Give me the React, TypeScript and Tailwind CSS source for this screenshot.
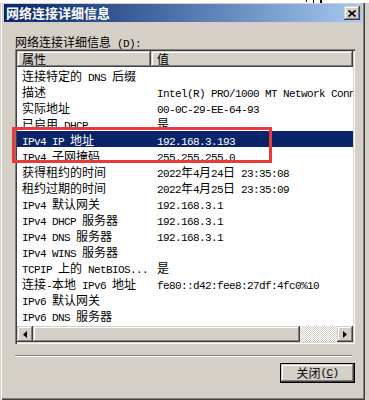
const rows: [string, string][] = [
  ["连接特定的 DNS 后缀", ""],
  ["描述", "Intel(R) PRO/1000 MT Network Connection"],
  ["实际地址", "00-0C-29-EE-64-93"],
  ["已启用 DHCP", "是"],
  ["IPv4 IP 地址", "192.168.3.193"],
  ["IPv4 子网掩码", "255.255.255.0"],
  ["获得租约的时间", "2022年4月24日 23:35:08"],
  ["租约过期的时间", "2022年4月25日 23:35:09"],
  ["IPv4 默认网关", "192.168.3.1"],
  ["IPv4 DHCP 服务器", "192.168.3.1"],
  ["IPv4 DNS 服务器", "192.168.3.1"],
  ["IPv4 WINS 服务器", ""],
  ["TCPIP 上的 NetBIOS...", "是"],
  ["连接-本地 IPv6 地址", "fe80::d42:fee8:27df:4fc0%10"],
  ["IPv6 默认网关", ""],
  ["IPv6 DNS 服务器", ""],
];

const raised =
  "bg-[#d4d0c8] shadow-[inset_-1px_-1px_#404040,inset_1px_1px_#d4d0c8,inset_-2px_-2px_#808080,inset_2px_2px_#ffffff]";

// SimSun look: latin half width (6px), CJK full width (12px)
function Txt({ s }: { s: string }) {
  const parts = s.match(/[\x00-\x7f]+|[^\x00-\x7f]+/g) ?? [];
  return (
    <>
      {parts.map((p, i) =>
        /^[\x00-\x7f]/.test(p) ? (
          <span key={i} className="font-['Liberation_Mono',monospace] text-[11px] tracking-[-0.6px]">
            {p}
          </span>
        ) : (
          <span key={i} className="font-['Noto_Sans_CJK_SC',sans-serif] text-[12px]">
            {p}
          </span>
        )
      )}
    </>
  );
}

function Arrow({ left }: { left?: boolean }) {
  return (
    <div className={`flex h-[16px] w-[16px] shrink-0 items-center justify-center ${raised}`}>
      <svg width="4" height="7" viewBox="0 0 4 7">
        {left ? <path d="M4 0 L0 3.5 L4 7 Z" fill="#000" /> : <path d="M0 0 L4 3.5 L0 7 Z" fill="#000" />}
      </svg>
    </div>
  );
}

export default function App() {
  return (
    <div className="relative h-[400px] w-[369px] overflow-hidden bg-white">
      <div className="flex h-[3px] gap-[6px] pl-[306px]">
        <div className="h-[2px] w-[1px] bg-black" />
        <div className="h-[3px] w-[1px] bg-black" />
        <div className="h-[3px] w-[2px] bg-black" />
      </div>
      <div className="flex">
        <div className="flex h-[397px] w-[365px] flex-col bg-[#d4d0c8] pt-[1px] pr-[3px] pb-[2px] pl-[4px] shadow-[inset_1px_0_#d4d0c8,inset_2px_0_#ffffff,inset_-1px_-1px_#404040,inset_-2px_-2px_#808080]">
          {/* title bar */}
          <div className="flex h-[18px] items-center justify-between bg-gradient-to-r from-[#0a246a] to-[#a6caf0] pr-[2px] pl-[2px]">
            <span className="font-['Noto_Sans_CJK_SC',sans-serif] text-[13px] leading-[18px] font-bold text-white">
              网络连接详细信息
            </span>
            <div className={`flex h-[14px] w-[16px] items-center justify-center ${raised}`}>
              <svg width="8" height="7" viewBox="0 0 8 7">
                <path d="M0.5 0.5 L7.5 6.5 M7.5 0.5 L0.5 6.5" stroke="#000" strokeWidth="1.6" />
              </svg>
            </div>
          </div>

          {/* body */}
          <div className="flex flex-1 flex-col pr-[7px] pl-[11px]">
            <div className="mt-[11px] h-[16px] leading-[16px] whitespace-pre text-black">
              <Txt s="网络连接详细信息 (D):" />
            </div>

            <div className="flex h-[295px] flex-col bg-white p-[2px] shadow-[inset_1px_1px_#808080,inset_2px_2px_#404040,inset_-1px_-1px_#ffffff,inset_-2px_-2px_#d4d0c8]">
              <div className="flex h-[16px] shrink-0">
                <div className={`w-[134px] pl-[5px] leading-[15px] ${raised}`}>
                  <Txt s="属性" />
                </div>
                <div className={`flex-1 pl-[6px] leading-[15px] ${raised}`}>
                  <Txt s="值" />
                </div>
              </div>
              <div className="flex-1 overflow-hidden">
                {rows.map(([k, v], i) => (
                  <div
                    key={i}
                    className={`flex h-[16px] leading-[16px] whitespace-pre ${
                      i === 4 ? "bg-[#0a246a] text-white" : "text-black"
                    }`}
                  >
                    <div className="w-[134px] shrink-0 overflow-hidden pl-[5px]">
                      <Txt s={k} />
                    </div>
                    <div className="flex-1 overflow-hidden pl-[6px]">
                      <Txt s={v} />
                    </div>
                  </div>
                ))}
              </div>
              <div className="flex h-[16px] shrink-0">
                <Arrow left />
                <div className={`w-[267px] ${raised}`} />
                <div className="flex-1 bg-[image:repeating-conic-gradient(#ffffff_0_25%,#d4d0c8_0_50%)] bg-[length:2px_2px]" />
                <Arrow />
              </div>
            </div>

            <div className="mt-[11px] mr-[3px] h-[2px] border-t border-b border-t-[#808080] border-b-white" />

            <div className="mt-[6px] flex justify-end">
              <div className="flex h-[20px] w-[75px] border border-black">
                <div className={`flex flex-1 items-center justify-center leading-[16px] text-black ${raised}`}>
                  <Txt s="关闭" />
                  <span className="font-['Liberation_Mono',monospace] text-[11px] tracking-[-0.6px]">
                    (<span className="underline">C</span>)
                  </span>
                </div>
              </div>
            </div>
          </div>
        </div>
        <div className="h-[397px] w-[4px] bg-[#d4d0c8]" />
      </div>

      {/* annotation box drawn over the list */}
      <div className="pointer-events-none absolute top-[127px] left-[12px] h-[36px] w-[260px] border-[3px] border-[#e83a3a]" />
    </div>
  );
}
